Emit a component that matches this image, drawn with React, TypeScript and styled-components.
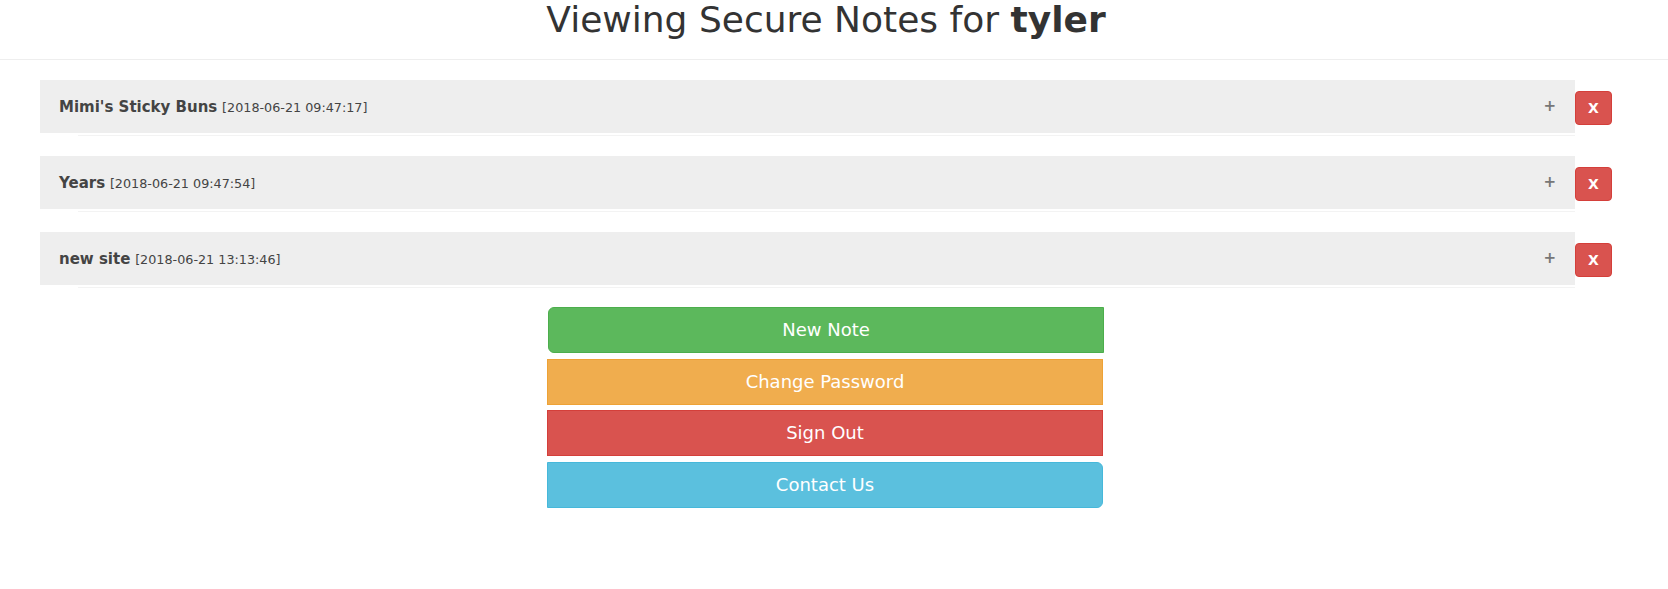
import React from "react";
import styled, { createGlobalStyle, css } from "styled-components";

const GlobalStyle = createGlobalStyle`
  html, body {
    margin: 0;
    padding: 0;
    background: #ffffff;
  }
  body {
    font-family: "DejaVu Sans", "Liberation Sans", sans-serif;
    color: #333333;
  }
  * { box-sizing: border-box; }
`;

const Page = styled.div`
  width: 100%;
  min-height: 589px;
`;

const Header = styled.header`
  border-bottom: 1px solid #eeeeee;
  padding: 0 16px 19px 0;
`;

const Title = styled.h1`
  margin: 0;
  font-size: 36px;
  line-height: 40px;
  font-weight: 500;
  color: #333333;
  text-align: center;
`;

const Main = styled.main`
  padding: 20px 56px 0 40px;
`;

const NoteList = styled.div`
  display: flex;
  flex-direction: column;
  gap: 20px;
`;

const NoteRow = styled.div`
  display: flex;
  align-items: flex-start;
`;

const NoteCard = styled.div`
  flex: 1;
  display: flex;
  flex-direction: column;
`;

const NoteHeading = styled.div`
  height: 53px;
  background: #eeeeee;
  display: flex;
  align-items: center;
  justify-content: space-between;
  padding: 0 19px 0 19px;
`;

const NoteTitle = styled.div`
  font-size: 15px;
  color: #444444;
  white-space: nowrap;
`;

const NoteName = styled.strong`
  font-weight: 700;
`;

const NoteDate = styled.small`
  font-size: 85%;
  font-weight: 400;
  color: #444444;
`;

const Toggle = styled.span`
  font-size: 15px;
  font-weight: 700;
  color: #777777;
  line-height: 1;
`;

const NoteBodyLine = styled.div`
  height: 1px;
  margin: 2px 0 0 38px;
  background: #f3f3f3;
`;

const DeleteButton = styled.button`
  margin-top: 11px;
  width: 37px;
  height: 34px;
  padding: 6px 12px;
  border: 1px solid #d43f3a;
  border-radius: 4px;
  background: #d9534f;
  color: #ffffff;
  font-family: "DejaVu Sans", "Liberation Sans", sans-serif;
  font-size: 14px;
  font-weight: 700;
  line-height: 20px;
  display: flex;
  align-items: center;
  justify-content: center;
  cursor: pointer;
`;

const ButtonGroup = styled.div`
  width: 556px;
  margin: 19px auto 0;
  display: flex;
  flex-direction: column;
`;

type Variant = "success" | "warning" | "danger" | "info";
type Position = "first" | "middle" | "last";

const palette: Record<Variant, { bg: string; border: string }> = {
  success: { bg: "#5cb85c", border: "#4cae4c" },
  warning: { bg: "#f0ad4e", border: "#eea236" },
  danger: { bg: "#d9534f", border: "#d43f3a" },
  info: { bg: "#5bc0de", border: "#46b8da" },
};

const ActionButton = styled.button<{ $variant: Variant; $position: Position; $gap: number }>`
  display: block;
  width: 556px;
  height: 46px;
  padding: 10px 16px;
  margin-top: ${(p) => p.$gap}px;
  font-family: "DejaVu Sans", "Liberation Sans", sans-serif;
  font-size: 18px;
  line-height: 24px;
  color: #ffffff;
  text-align: center;
  cursor: pointer;
  background: ${(p) => palette[p.$variant].bg};
  border: 1px solid ${(p) => palette[p.$variant].border};
  border-radius: 0;
  ${(p) =>
    p.$position === "first"
      ? css`
          border-radius: 6px 0 0 6px;
        `
      : css`
          margin-left: -1px;
        `}
  ${(p) =>
    p.$position === "last" &&
    css`
      border-radius: 0 6px 6px 0;
    `}
`;

const notes = [
  { name: "Mimi's Sticky Buns", date: "[2018-06-21 09:47:17]" },
  { name: "Years", date: "[2018-06-21 09:47:54]" },
  { name: "new site", date: "[2018-06-21 13:13:46]" },
];

const actions: { label: string; variant: Variant; position: Position; gap: number }[] = [
  { label: "New Note", variant: "success", position: "first", gap: 0 },
  { label: "Change Password", variant: "warning", position: "middle", gap: 6 },
  { label: "Sign Out", variant: "danger", position: "middle", gap: 5 },
  { label: "Contact Us", variant: "info", position: "last", gap: 6 },
];

export default function App() {
  return (
    <Page>
      <GlobalStyle />
      <Header>
        <Title>
          Viewing Secure Notes for <strong>tyler</strong>
        </Title>
      </Header>
      <Main>
        <NoteList>
          {notes.map((n) => (
            <NoteRow key={n.name}>
              <NoteCard>
                <NoteHeading>
                  <NoteTitle>
                    <NoteName>{n.name}</NoteName> <NoteDate>{n.date}</NoteDate>
                  </NoteTitle>
                  <Toggle>+</Toggle>
                </NoteHeading>
                <NoteBodyLine />
              </NoteCard>
              <DeleteButton>X</DeleteButton>
            </NoteRow>
          ))}
        </NoteList>
        <ButtonGroup>
          {actions.map((a) => (
            <ActionButton key={a.label} $variant={a.variant} $position={a.position} $gap={a.gap}>
              {a.label}
            </ActionButton>
          ))}
        </ButtonGroup>
      </Main>
    </Page>
  );
}
